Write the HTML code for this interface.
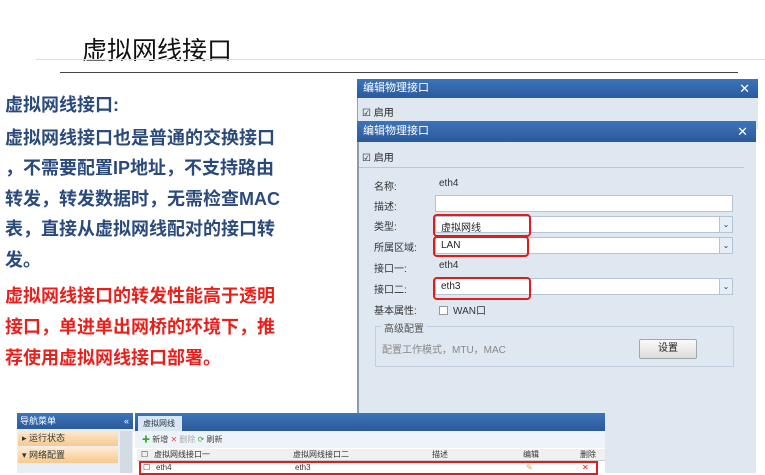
<!DOCTYPE html>
<html><head><meta charset="utf-8"><style>
*{margin:0;padding:0;box-sizing:border-box}
body{width:765px;height:473px;overflow:hidden;background:#fff;position:relative;font-family:"Liberation Sans","Noto Sans CJK SC",sans-serif}
.a{position:absolute}
.t{font-size:18px;font-weight:bold;color:#2a4a7c;white-space:nowrap;left:5px}
.r{color:#e8201c}
.lab{font-size:10px;color:#333;left:374px}
.val{font-size:10px;color:#333;left:439px}
.inp{background:#fff;border:1px solid #b5c3d6;left:435px;width:298px;height:17px;font-size:10px;color:#222;padding:2px 5px}
.dd{position:absolute;right:0;top:0;width:13px;height:15px;background:#e6edf6;border-left:1px solid #b5c3d6;font-size:8px;color:#335;text-align:center;line-height:15px}
.red{border:2px solid #e21b1b;border-radius:4px}
.tb{background:linear-gradient(#3d74b8,#2a5a9c);color:#fff;font-size:11px;padding-left:6px}
</style></head><body>
<div class="a" style="left:82px;top:31px;font-size:25px;color:#111">虚拟网线接口</div>
<div class="a" style="left:36px;top:59px;width:730px;height:1px;background:#d8dde6"></div>
<div class="a" style="left:60px;top:72px;width:678px;height:1px;background:#444"></div>

<div class="a t" style="top:91px">虚拟网线接口:</div>
<div class="a t" style="top:124px">虚拟网线接口也是普通的交换接口</div>
<div class="a t" style="top:154px">，不需要配置IP地址，不支持路由</div>
<div class="a t" style="top:185px">转发，转发数据时，无需检查MAC</div>
<div class="a t" style="top:215px">表，直接从虚拟网线配对的接口转</div>
<div class="a t" style="top:246px">发。</div>
<div class="a t r" style="top:282px">虚拟网线接口的转发性能高于透明</div>
<div class="a t r" style="top:313px">接口，单进单出网桥的环境下，推</div>
<div class="a t r" style="top:344px">荐使用虚拟网线接口部署。</div>

<!-- back dialog -->
<div class="a" style="left:357px;top:79px;width:401px;height:50px;background:#dfe7f1;border-left:1px solid #8aa"></div>
<div class="a tb" style="left:357px;top:79px;width:401px;height:19px;line-height:19px">编辑物理接口<span style="position:absolute;right:8px;font-size:13px">✕</span></div>
<div class="a" style="left:362px;top:104px;font-size:10px;color:#222">☑ 启用</div>
<!-- front dialog -->
<div class="a" style="left:357px;top:121px;width:399px;height:352px;background:#dfe7f1;border-left:2px solid #8a9bb0"></div>
<div class="a tb" style="left:357px;top:121px;width:399px;height:21px;line-height:21px">编辑物理接口<span style="position:absolute;right:8px;font-size:13px">✕</span></div>
<div class="a" style="left:362px;top:149px;font-size:10px;color:#222">☑ 启用</div>
<div class="a" style="left:359px;top:167px;width:385px;height:1px;background:#b8c6d8"></div>

<div class="a lab" style="top:178px">名称:</div><div class="a val" style="top:178px">eth4</div>
<div class="a lab" style="top:198px">描述:</div><div class="a inp" style="top:195px"></div>
<div class="a lab" style="top:218px">类型:</div><div class="a inp" style="top:216px">虚拟网线<div class="dd">⌄</div></div>
<div class="a lab" style="top:239px">所属区域:</div><div class="a inp" style="top:237px">LAN<div class="dd">⌄</div></div>
<div class="a lab" style="top:260px">接口一:</div><div class="a val" style="top:260px">eth4</div>
<div class="a lab" style="top:281px">接口二:</div><div class="a inp" style="top:278px">eth3<div class="dd">⌄</div></div>
<div class="a lab" style="top:302px">基本属性:</div><div class="a val" style="top:302px"><span style="display:inline-block;width:9px;height:9px;border:1px solid #999;background:#fff;margin-right:5px;vertical-align:-1px"></span>WAN口</div>
<div class="a red" style="left:433px;top:214px;width:98px;height:23px"></div>
<div class="a red" style="left:433px;top:236px;width:96px;height:21px"></div>
<div class="a red" style="left:433px;top:277px;width:98px;height:23px"></div>

<div class="a" style="left:375px;top:326px;width:359px;height:41px;border:1px solid #c3cfde"></div>
<div class="a" style="left:382px;top:320px;font-size:10px;color:#555;background:#dfe7f1;padding:0 2px">高级配置</div>
<div class="a" style="left:382px;top:341px;font-size:10px;color:#888">配置工作模式，MTU，MAC</div>
<div class="a" style="left:639px;top:339px;width:58px;height:20px;border:1px solid #9aa;border-radius:2px;background:linear-gradient(#fafafa,#dcdcdc);font-size:10px;text-align:center;line-height:18px;color:#222">设置</div>

<!-- bottom screenshot -->
<div class="a" style="left:17px;top:413px;width:116px;height:60px;background:#e8eef6"></div>
<div class="a tb" style="left:17px;top:413px;width:116px;height:16px;line-height:16px;font-size:9px;padding-left:3px">导航菜单<span style="position:absolute;right:4px">«</span></div>
<div class="a" style="left:18px;top:431px;width:100px;height:15px;background:linear-gradient(#fde9cf,#f7c98e);font-size:9px;line-height:15px;padding-left:4px;color:#333">▸ 运行状态</div>
<div class="a" style="left:18px;top:448px;width:100px;height:15px;background:linear-gradient(#fde9cf,#f7c98e);font-size:9px;line-height:15px;padding-left:4px;color:#333">▾ 网络配置</div>
<div class="a" style="left:120px;top:431px;width:12px;height:42px;background:#d4dbe5"></div>
<div class="a" style="left:135px;top:413px;width:470px;height:60px;background:#fff"></div>
<div class="a" style="left:135px;top:413px;width:470px;height:18px;background:linear-gradient(#3d74b8,#2a5a9c)"></div>
<div class="a" style="left:138px;top:416px;width:44px;height:15px;background:#dbe6f4;font-size:8px;line-height:15px;padding-left:5px;color:#234">虚拟网线</div>
<div class="a" style="left:135px;top:431px;width:470px;height:17px;background:#eef3fa;font-size:8px;line-height:17px;padding-left:7px;color:#444"><span style="color:#3a3">✚</span> 新增 <span style="color:#e44">✕</span> <span style="color:#aaa">删除</span> <span style="color:#3a3">⟳</span> 刷新</div>
<div class="a" style="left:137px;top:449px;width:468px;height:12px;background:#f0f0f0;border-bottom:1px solid #ccc;font-size:8px;color:#333;line-height:12px">
<span class="a" style="left:4px">☐</span><span class="a" style="left:17px">虚拟网线接口一</span><span class="a" style="left:156px">虚拟网线接口二</span><span class="a" style="left:295px">描述</span><span class="a" style="left:386px">编辑</span><span class="a" style="left:443px">删除</span></div>
<div class="a" style="left:139px;top:461px;width:459px;height:14px;border:2px solid #e21b1b;font-size:8px;color:#333;line-height:10px">
<span class="a" style="left:2px">☐</span><span class="a" style="left:15px">eth4</span><span class="a" style="left:154px">eth3</span><span class="a" style="left:385px;color:#e89a2a">✎</span><span class="a" style="left:441px;color:#e21b1b">✕</span></div>
</body></html>
